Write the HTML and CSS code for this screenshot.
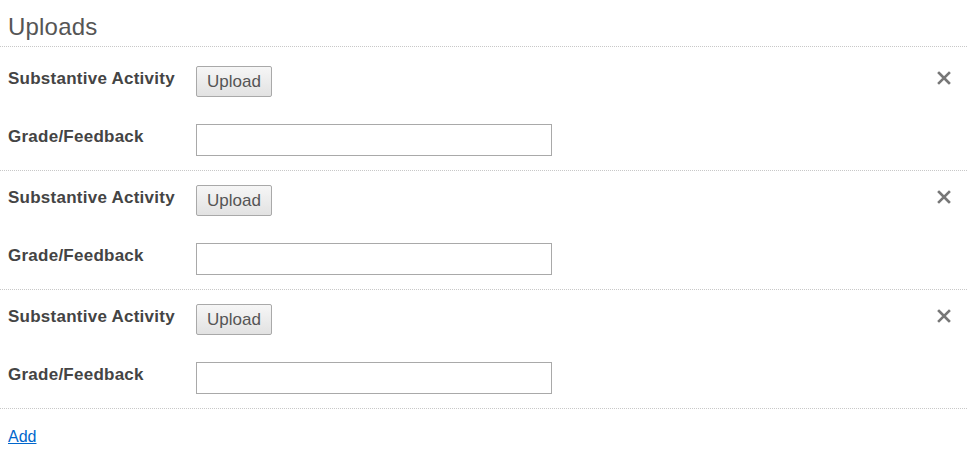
FILE: index.html
```html
<!DOCTYPE html>
<html lang="en">
<head>
    <meta charset="UTF-8">
    <meta name="viewport" content="width=device-width, initial-scale=1.0">
    <title>Uploads</title>
    <link rel="stylesheet" href="styles.css">
</head>
<body>
    <div class="uploads">
        <h2 class="uploads-title">Uploads</h2>

        <div class="upload-group first">
            <div class="upload-row">
                <label class="field-label">Substantive Activity</label>
                <button class="upload-btn">Upload</button>
                <a class="remove" href="#" title="Remove">
                    <svg width="14" height="14" viewBox="0 0 14 14"><path d="M2 2 L12 12 M12 2 L2 12" stroke="#777" stroke-width="2.6" stroke-linecap="square"/></svg>
                </a>
            </div>
            <div class="upload-row">
                <label class="field-label">Grade/Feedback</label>
                <input type="text" class="grade-input">
            </div>
        </div>

        <div class="upload-group">
            <div class="upload-row">
                <label class="field-label">Substantive Activity</label>
                <button class="upload-btn">Upload</button>
                <a class="remove" href="#" title="Remove">
                    <svg width="14" height="14" viewBox="0 0 14 14"><path d="M2 2 L12 12 M12 2 L2 12" stroke="#777" stroke-width="2.6" stroke-linecap="square"/></svg>
                </a>
            </div>
            <div class="upload-row">
                <label class="field-label">Grade/Feedback</label>
                <input type="text" class="grade-input">
            </div>
        </div>

        <div class="upload-group">
            <div class="upload-row">
                <label class="field-label">Substantive Activity</label>
                <button class="upload-btn">Upload</button>
                <a class="remove" href="#" title="Remove">
                    <svg width="14" height="14" viewBox="0 0 14 14"><path d="M2 2 L12 12 M12 2 L2 12" stroke="#777" stroke-width="2.6" stroke-linecap="square"/></svg>
                </a>
            </div>
            <div class="upload-row">
                <label class="field-label">Grade/Feedback</label>
                <input type="text" class="grade-input">
            </div>
        </div>

        <div class="add-row">
            <a href="#" class="add-link">Add</a>
        </div>
    </div>
</body>
</html>
```

FILE: styles.css
```css
body {
    margin: 0;
    font-family: "Liberation Sans", Arial, sans-serif;
    color: #444;
    background: #fff;
}
.uploads {
    width: 967px;
}
.uploads-title {
    margin: 0;
    padding: 14px 8px 6px;
    font-size: 24px;
    font-weight: normal;
    line-height: 26px;
    letter-spacing: 0.2px;
    color: #555;
    border-bottom: 1px dotted #c8c8c8;
}
.upload-group {
    display: flex;
    flex-direction: column;
    gap: 27px;
    padding: 14px 16px 14px 0;
    border-bottom: 1px dotted #c8c8c8;
}
.upload-group.first {
    padding-top: 19px;
}
.upload-row {
    display: flex;
    align-items: flex-start;
}
.field-label {
    width: 188px;
    padding-left: 8px;
    margin-top: 3px;
    font-size: 17px;
    font-weight: bold;
    line-height: 20px;
    letter-spacing: 0.25px;
    color: #444;
}
.upload-btn {
    height: 31px;
    padding: 0 10px;
    font-family: "Liberation Sans", Arial, sans-serif;
    font-size: 17px;
    color: #555;
    background: linear-gradient(#f6f6f6, #e2e2e2);
    border: 1px solid #a9a9a9;
    border-radius: 2px;
}
.remove {
    margin-left: auto;
    margin-top: 5px;
    display: block;
    line-height: 0;
}
.grade-input {
    width: 356px;
    height: 32px;
    box-sizing: border-box;
    margin: 0;
    padding: 4px 6px;
    font-size: 16px;
    border: 1px solid #a9a9a9;
}
.add-row {
    padding: 19px 8px;
}
.add-link {
    font-size: 16px;
    color: #0066cc;
}
```
